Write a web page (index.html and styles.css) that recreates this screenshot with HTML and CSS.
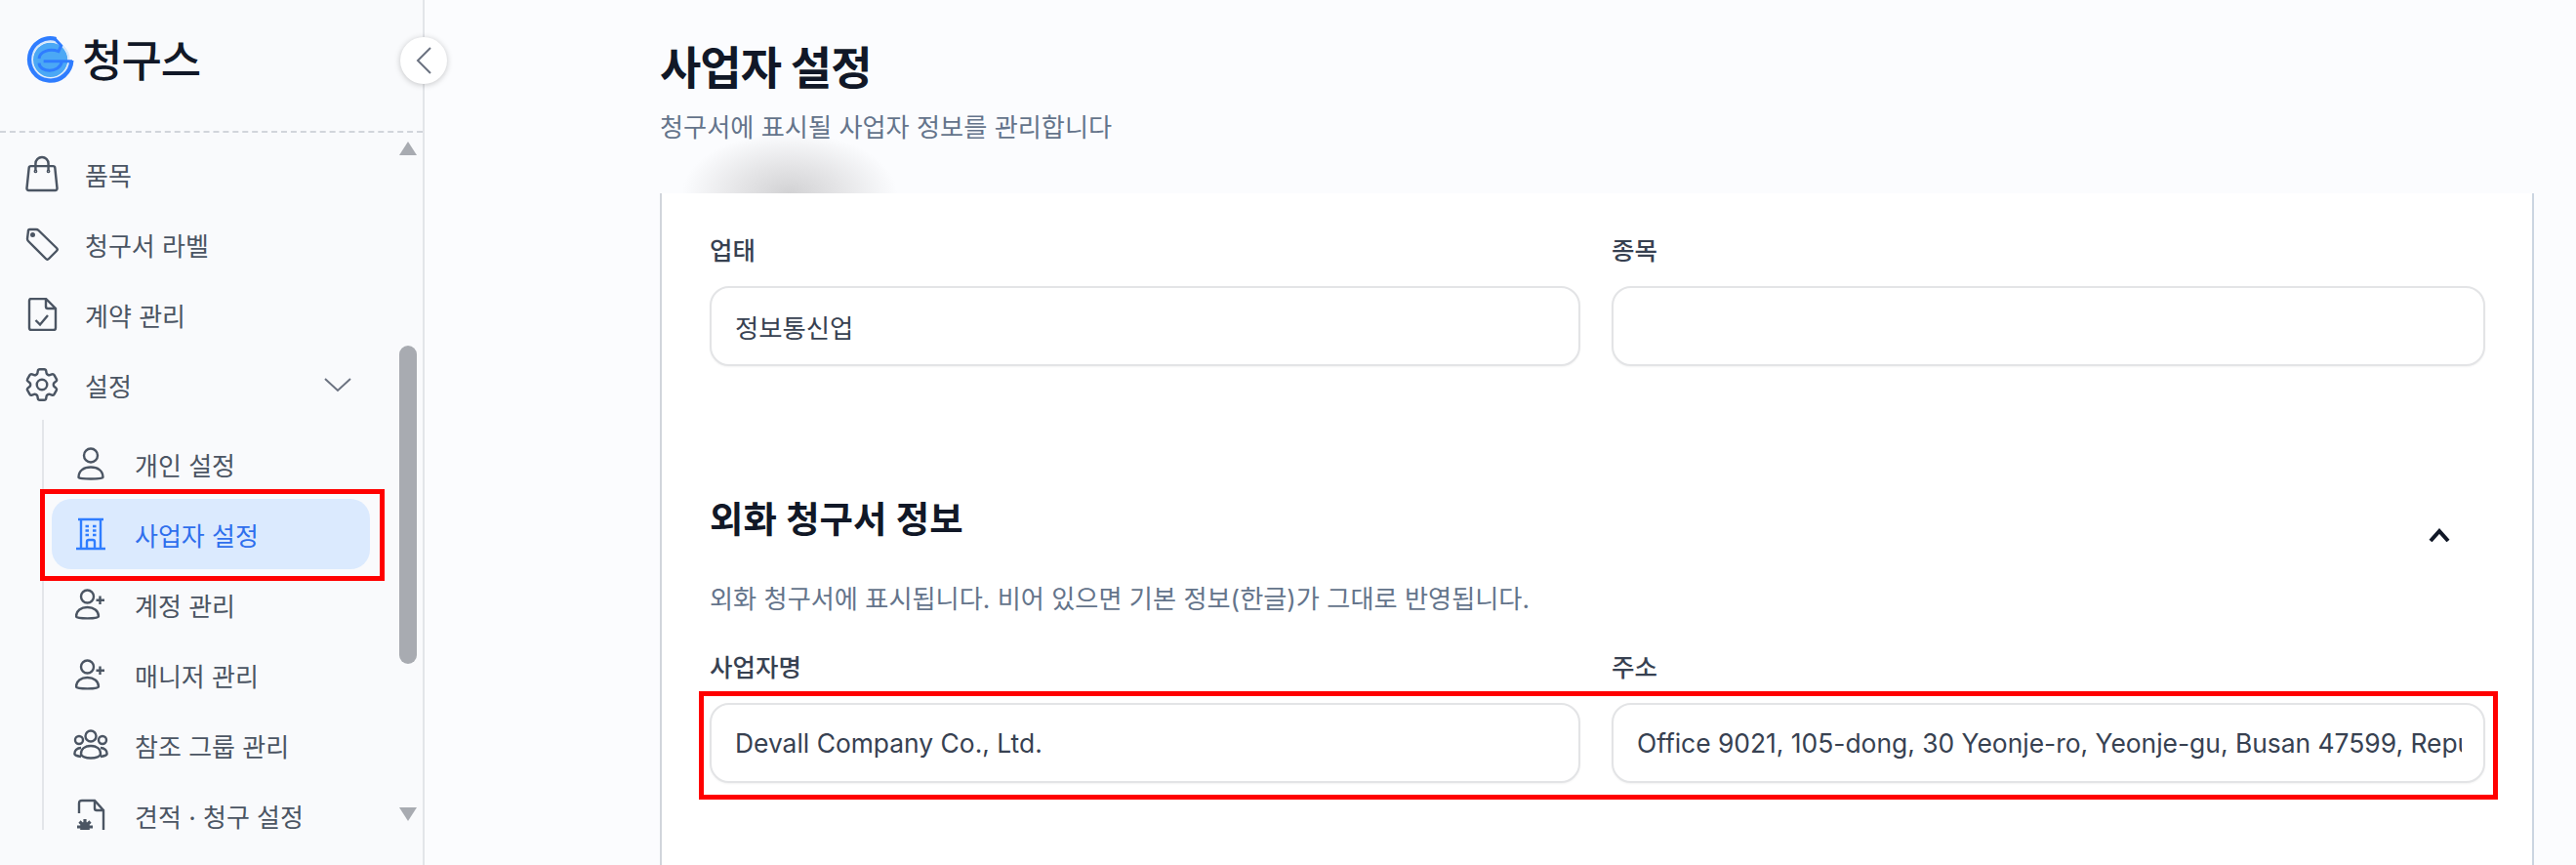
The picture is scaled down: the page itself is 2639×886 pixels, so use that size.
FILE: index.html
```html
<!DOCTYPE html>
<html lang="ko">
<head>
<meta charset="utf-8">
<title>사업자 설정</title>
<link rel="stylesheet" href="styles.css">
</head>
<body>
<div class="app">
  <aside class="sidebar">
    <div class="brand">
      <svg class="logo" viewBox="0 0 192 180">
        <circle cx="95" cy="88" r="53" fill="#4ba8f5"/>
        <circle cx="95" cy="88" r="57" fill="none" stroke="#d3e6fb" stroke-width="5"/>
        <path d="M112 24A65 65 0 1 0 160 90" fill="none" stroke="#2f7dff" stroke-width="13"/>
        <path d="M106 20L128 44L120 62C92 52 62 62 60 84" fill="none" stroke="#2f7dff" stroke-width="9"/>
        <path d="M60 98C62 128 122 130 130 94M74 92H162" fill="none" stroke="#2f7dff" stroke-width="9"/>
      </svg>
      <span class="brand-name">청구스</span>
    </div>
    <button class="collapse" type="button" aria-label="접기">
      <svg viewBox="0 0 16 28"><path d="M15 1L2 14l13 13"/></svg>
    </button>
    <nav class="nav">
      <div class="scrollbar">
        <span class="arrow-up"></span>
        <span class="thumb"></span>
        <span class="arrow-down"></span>
      </div>
      <a class="item"><span class="ico"><svg class="w42" viewBox="0 0 24 24"><path d="M15.75 10.5V6a3.75 3.75 0 10-7.5 0v4.5m11.356-1.993l1.263 12c.07.665-.45 1.243-1.119 1.243H4.25a1.125 1.125 0 01-1.12-1.243l1.264-12A1.125 1.125 0 015.513 7.5h12.974c.576 0 1.059.435 1.119 1.007zM8.625 10.5a.375.375 0 11-.75 0 .375.375 0 01.75 0zm7.5 0a.375.375 0 11-.75 0 .375.375 0 01.75 0z"/></svg></span>품목</a>
      <a class="item"><span class="ico"><svg class="w34" viewBox="0 0 34 34"><path d="M3 3.500Q3 2 4.500 2H11Q12.500 2 13.500 3L32 21Q33.500 22.500 32 24L24 32Q22.500 33.500 21 32L3 14Q2 13 2 11.500Z"/><circle cx="7.500" cy="7.500" r="1.300"/></svg></span>청구서 라벨</a>
      <a class="item"><span class="ico"><svg class="w34" viewBox="0 0 34 34"><path d="M6 1H21L31 11V31Q31 33 29 33H6Q4 33 4 31V3Q4 1 6 1ZM21 1V9Q21 11 23 11H31M10.500 23L15 27.500L23 18"/></svg></span>계약 관리</a>
      <a class="item"><span class="ico"><svg class="w42" viewBox="0 0 24 24"><path d="M9.594 3.94c.09-.542.56-.94 1.11-.94h2.593c.55 0 1.02.398 1.11.94l.213 1.281c.063.374.313.686.645.87.074.04.147.083.22.127.324.196.72.257 1.075.124l1.217-.456a1.125 1.125 0 011.37.49l1.296 2.247a1.125 1.125 0 01-.26 1.431l-1.003.827c-.293.24-.438.613-.431.992a6.759 6.759 0 010 .255c-.007.378.138.75.43.99l1.005.828c.424.35.534.954.26 1.43l-1.298 2.247a1.125 1.125 0 01-1.369.491l-1.217-.456c-.355-.133-.75-.072-1.076.124a6.57 6.57 0 01-.22.128c-.331.183-.581.495-.644.869l-.213 1.28c-.09.543-.56.941-1.11.941h-2.594c-.55 0-1.02-.398-1.11-.94l-.213-1.281c-.062-.374-.312-.686-.644-.87a6.52 6.52 0 01-.22-.127c-.325-.196-.72-.257-1.076-.124l-1.217.456a1.125 1.125 0 01-1.369-.49l-1.297-2.247a1.125 1.125 0 01.26-1.431l1.004-.827c.292-.24.437-.613.43-.992a6.932 6.932 0 010-.255c.007-.378-.138-.75-.43-.99l-1.004-.828a1.125 1.125 0 01-.26-1.43l1.297-2.247a1.125 1.125 0 011.37-.491l1.216.456c.356.133.751.072 1.076-.124.072-.044.146-.087.22-.128.332-.183.582-.495.644-.869l.214-1.281zM15 12a3 3 0 11-6 0 3 3 0 016 0z"/></svg></span>설정<svg class="caret" viewBox="0 0 28 16"><path d="M1 2l13 12L27 2"/></svg></a>
      <div class="sub">
        <a class="item sub-first"><span class="ico"><svg class="w28" viewBox="0 0 28 34"><circle cx="14" cy="8.500" r="7"/><path d="M1.500 31C1.500 24 7 20.500 14 20.500S26.500 24 26.500 31C26.500 33 1.500 33 1.500 31Z"/></svg></span>개인 설정</a>
        <a class="item active"><span class="ico"><svg class="w30" viewBox="0 0 30 34"><path d="M2 2H28M5 2V32M25 2V32M0 32H30M11 32V25Q11 23 13 23H17Q19 23 19 25V32M9.500 9H13M17 9H20.500M9.500 13.500H13M17 13.500H20.500M9.500 18H13M17 18H20.500"/></svg></span>사업자 설정</a>
        <a class="item"><span class="ico"><svg class="w32" viewBox="0 0 32 32"><circle cx="12.500" cy="8" r="6.500"/><path d="M1 28.500C1 22.500 6 19 12.500 19S24 22.500 24 28.500C24 31 1 31 1 28.500ZM25.500 7.500V16M21.500 11.800H30"/></svg></span>계정 관리</a>
        <a class="item"><span class="ico"><svg class="w32" viewBox="0 0 32 32"><circle cx="12.500" cy="8" r="6.500"/><path d="M1 28.500C1 22.500 6 19 12.500 19S24 22.500 24 28.500C24 31 1 31 1 28.500ZM25.500 7.500V16M21.500 11.800H30"/></svg></span>매니저 관리</a>
        <a class="item"><span class="ico"><svg class="w36" viewBox="0 0 36 32"><circle cx="18" cy="7" r="5.500"/><circle cx="6" cy="11" r="4"/><circle cx="30" cy="11" r="4"/><path d="M8 25C8 20 12 17 18 17S28 20 28 25C28 31 8 31 8 25ZM8 19C4 19 1 22 1.500 25.500Q2 27 8 28M28 19C32 19 35 22 34.500 25.500Q34 27 28 28"/></svg></span>참조 그룹 관리</a>
        <a class="item"><span class="ico"><svg class="w30 tall" viewBox="0 0 30 46"><path d="M3 15V5Q3 2 6 2H19L28 12V44M19 2V10Q19 12 21 12H28"/><circle class="gear-core" cx="9" cy="29" r="5"/><path class="gear" d="M9 21V37M1 29H17M3.500 23.500L14.500 34.500M14.500 23.500L3.500 34.500"/></svg></span>견적 · 청구 설정</a>
      </div>
    </nav>
  </aside>
  <main class="main">
    <header class="head">
      <span class="redact"></span>
      <h1 class="title">사업자 설정</h1>
      <p class="subtitle">청구서에 표시될 사업자 정보를 관리합니다</p>
    </header>
    <section class="card">
      <div class="labels first">
        <label class="label">업태</label>
        <label class="label">종목</label>
      </div>
      <div class="inputs">
        <input class="field" type="text" value="정보통신업">
        <input class="field" type="text" value="">
      </div>
      <div class="section-head">
        <h2 class="section-title">외화 청구서 정보</h2>
        <svg class="fold" viewBox="0 0 22 14"><path d="M2 13L11 3l9 10"/></svg>
      </div>
      <p class="section-desc">외화 청구서에 표시됩니다. 비어 있으면 기본 정보(한글)가 그대로 반영됩니다.</p>
      <div class="labels">
        <label class="label">사업자명</label>
        <label class="label">주소</label>
      </div>
      <div class="inputs marked">
        <input class="field" type="text" value="Devall Company Co., Ltd.">
        <input class="field" type="text" value="Office 9021, 105-dong, 30 Yeonje-ro, Yeonje-gu, Busan 47599, Republic of Korea">
      </div>
    </section>
  </main>
</div>
</body>
</html>
```

FILE: styles.css
```css
* { box-sizing: border-box; }
html, body { margin: 0; padding: 0; height: 100%; }
body {
  width: 2639px;
  height: 886px;
  overflow: hidden;
  background: #fbfcfe;
  font-family: Inter, "Noto Sans CJK KR", sans-serif;
  color: #374151;
}
.app { display: flex; height: 886px; }

/* sidebar */
.sidebar {
  position: relative;
  width: 435px;
  flex: none;
  background: #f9fafc;
  border-right: 2px solid #e3e5e9;
}
.brand {
  height: 136px;
  display: flex;
  align-items: flex-start;
  padding: 33px 0 0 20px;
  border-bottom: 2px dashed #d1d5db;
}
.logo { width: 64px; height: 60px; flex: none; margin-top: -1px; }
.brand-name {
  font-size: 45px;
  line-height: 60px;
  font-weight: 500;
  color: #111827;
  letter-spacing: -1px;
}
.collapse {
  position: absolute;
  left: 410px;
  top: 38px;
  width: 48px;
  height: 48px;
  padding: 0;
  border: 0;
  border-radius: 50%;
  background: #fff;
  box-shadow: 0 1px 6px rgba(0, 0, 0, .22);
  display: flex;
  align-items: center;
  justify-content: center;
  z-index: 2;
}
.collapse svg { width: 16px; height: 28px; fill: none; stroke: #6b7280; stroke-width: 2; }
.nav {
  position: relative;
  height: 714px;
  padding-top: 6px;
  overflow: hidden;
}
.scrollbar {
  position: absolute;
  left: 409px;
  top: 9px;
  width: 18px;
  height: 696px;
  display: flex;
  flex-direction: column;
  align-items: center;
}
.arrow-up {
  width: 0;
  height: 0;
  border-left: 9px solid transparent;
  border-right: 9px solid transparent;
  border-bottom: 14px solid #a8abb1;
}
.thumb {
  width: 18px;
  height: 326px;
  margin-top: 195px;
  border-radius: 9px;
  background: #a8abb1;
}
.arrow-down {
  width: 0;
  height: 0;
  margin-top: 147px;
  border-left: 9px solid transparent;
  border-right: 9px solid transparent;
  border-top: 14px solid #a8abb1;
}
.item {
  display: flex;
  align-items: center;
  height: 72px;
  width: 360px;
  padding-left: 26px;
  font-size: 26px;
  color: #4b5563;
  white-space: nowrap;
}
.ico {
  width: 34px;
  margin-right: 27px;
  flex: none;
  display: flex;
  align-items: center;
  justify-content: center;
}
.ico svg { fill: none; stroke: #4b5563; stroke-width: 2.4; display: block; flex: none; }
.ico svg.w42 { stroke-width: 1.4; }
.w42 { width: 42px; height: 42px; margin: -4px; }
.w34 { width: 34px; height: 34px; }
.w28 { width: 28px; height: 34px; }
.w30 { width: 30px; height: 34px; }
.w32 { width: 32px; height: 32px; }
.w36 { width: 36px; height: 32px; }
.tall { height: 46px; margin-top: 12px; }
.caret { width: 28px; height: 16px; margin-left: auto; fill: none; stroke: #6b7280; stroke-width: 2; }
.sub {
  margin-left: 43px;
  width: 340px;
  border-left: 2px solid #e3e5e9;
  padding-top: 9px;
}
.sub .item { width: 326px; margin-left: 8px; padding-left: 22px; }
.sub .ico { width: 36px; margin-right: 27px; }
.active {
  position: relative;
  background: #dbeafe;
  border-radius: 20px;
}
.item.active { color: #2f6fed; }
.active .ico svg { stroke: #2f7dff; }
.active::after {
  content: "";
  position: absolute;
  left: -12px;
  top: -10px;
  right: -15px;
  bottom: -12px;
  border: 5px solid #ff0000;
  pointer-events: none;
}
.ico svg .gear { stroke-width: 3.2; }
.ico svg .gear-core { fill: #4b5563; stroke: none; }

/* main */
.main {
  flex: 1;
  min-width: 0;
  display: flex;
  flex-direction: column;
  padding: 0 43px 0 241px;
}
.head {
  position: relative;
  height: 198px;
  flex: none;
  padding-top: 42px;
}
.redact {
  position: absolute;
  left: 8px;
  top: 130px;
  width: 240px;
  height: 68px;
  background: radial-gradient(ellipse 110px 62px at 52% 100%, #d2d2d4 0%, #e4e4e6 45%, rgba(251, 252, 254, 0) 100%);
}
.title {
  margin: 0;
  font-size: 46px;
  line-height: 54px;
  font-weight: 700;
  color: #111827;
  letter-spacing: -1px;
}
.subtitle {
  position: relative;
  margin: 18px 0 0;
  font-size: 26.200px;
  line-height: 34px;
  color: #64748b;
}
.card {
  flex: 1;
  position: relative;
  background: #fff;
  border-left: 2px solid #d1d5db;
  border-right: 2px solid #cbd5e1;
  padding: 42px 47px 0 49px;
}
.labels, .inputs {
  display: grid;
  grid-template-columns: 892px 895px;
  column-gap: 32px;
}
.label {
  font-size: 25.500px;
  line-height: 34px;
  font-weight: 500;
  color: #374151;
}
.labels { margin-bottom: 19px; }
.field {
  display: block;
  width: 100%;
  height: 82px;
  padding: 0 22px 0 24px;
  background: #fff;
  border: 2px solid #e3e4e6;
  border-radius: 20px;
  box-shadow: 0 1px 2px rgba(0, 0, 0, .05);
  font: inherit;
  font-size: 26.400px;
  color: #374151;
  outline: none;
}
.section-head {
  display: flex;
  justify-content: space-between;
  align-items: flex-start;
  margin-top: 136px;
  height: 44px;
}
.section-title {
  margin: 0;
  font-size: 37.400px;
  line-height: 44px;
  font-weight: 600;
  color: #111827;
}
.fold {
  width: 22px;
  height: 14px;
  margin: 30px 37px 0 0;
  fill: none;
  stroke: #111827;
  stroke-width: 4;
}
.section-desc {
  margin: 42px 0 36px;
  font-size: 26.200px;
  line-height: 34px;
  color: #64748b;
}
.marked { position: relative; }
.marked::after {
  content: "";
  position: absolute;
  left: -11px;
  top: -12px;
  right: -12px;
  bottom: -17px;
  border: 5px solid #ff0000;
  pointer-events: none;
}
```
